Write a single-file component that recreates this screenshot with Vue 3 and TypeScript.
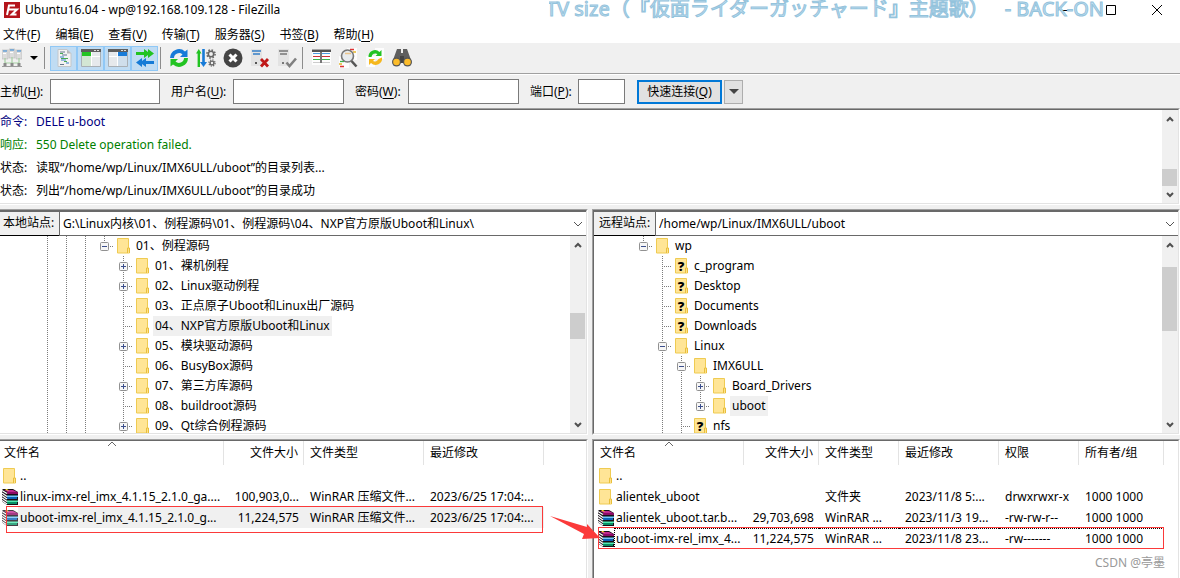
<script setup lang="ts">
import { ref } from 'vue'

interface Mnemonic { text: string; key: string }
interface TreeNode { guides: string; label: string; unknown?: boolean; selected?: boolean }
interface FileRow { icon: string; cells: string[]; selected?: boolean; focused?: boolean }
interface Column { title: string; width: number; right?: boolean }

const menus: Mnemonic[] = [
  { text: '文件', key: 'F' },
  { text: '编辑', key: 'E' },
  { text: '查看', key: 'V' },
  { text: '传输', key: 'T' },
  { text: '服务器', key: 'S' },
  { text: '书签', key: 'B' },
  { text: '帮助', key: 'H' },
]

const toggles = [
  { id: 'messages', label: '消息日志' },
  { id: 'local', label: '本地目录树' },
  { id: 'remote', label: '远程目录树' },
  { id: 'queue', label: '传输队列' },
]
const actions = [
  { id: 'refresh', label: '刷新' },
  { id: 'process', label: '处理队列' },
  { id: 'cancel', label: '取消' },
  { id: 'disconnect', label: '断开连接' },
  { id: 'reconnect', label: '重新连接' },
]
const tools = [
  { id: 'filter', label: '过滤器' },
  { id: 'compare', label: '目录比较' },
  { id: 'sync', label: '同步浏览' },
  { id: 'find', label: '搜索' },
]

const fields = [
  { id: 'host', text: '主机', key: 'H' },
  { id: 'user', text: '用户名', key: 'U' },
  { id: 'pass', text: '密码', key: 'W' },
  { id: 'port', text: '端口', key: 'P' },
]
const login = ref<Record<string, string>>({ host: '', user: '', pass: '', port: '' })

const log = [
  { kind: 'command', name: '命令:', text: 'DELE u-boot' },
  { kind: 'reply', name: '响应:', text: '550 Delete operation failed.' },
  { kind: 'status', name: '状态:', text: '读取“/home/wp/Linux/IMX6ULL/uboot”的目录列表...' },
  { kind: 'status', name: '状态:', text: '列出“/home/wp/Linux/IMX6ULL/uboot”的目录成功' },
]

/* Guide letters: . blank, | line, t branch, p/P closed node, m/M open node (capital = last child) */
const sites: {
  id: string; label: string; path: string; nodes: TreeNode[]; thumb: number[]
  columns: Column[]; rows: FileRow[]
}[] = [
  {
    id: 'local-side',
    label: '本地站点:',
    path: 'G:\\Linux内核\\01、例程源码\\01、例程源码\\04、NXP官方原版Uboot和Linux\\',
    thumb: [60, 26, 77],
    nodes: [
      { guides: '|||M', label: '01、例程源码' },
      { guides: '|||.p', label: '01、裸机例程' },
      { guides: '|||.p', label: '02、Linux驱动例程' },
      { guides: '|||.t', label: '03、正点原子Uboot和Linux出厂源码' },
      { guides: '|||.t', label: '04、NXP官方原版Uboot和Linux', selected: true },
      { guides: '|||.p', label: '05、模块驱动源码' },
      { guides: '|||.t', label: '06、BusyBox源码' },
      { guides: '|||.p', label: '07、第三方库源码' },
      { guides: '|||.t', label: '08、buildroot源码' },
      { guides: '|||.p', label: '09、Qt综合例程源码' },
    ],
    columns: [
      { title: '文件名', width: 224 },
      { title: '文件大小', width: 80, right: true },
      { title: '文件类型', width: 120 },
      { title: '最近修改', width: 120 },
    ],
    rows: [
      { icon: 'folder', cells: ['..', '', '', ''] },
      { icon: 'rar', cells: ['linux-imx-rel_imx_4.1.15_2.1.0_ga....', '100,903,0...', 'WinRAR 压缩文件...', '2023/6/25 17:04:...'] },
      { icon: 'rar', cells: ['uboot-imx-rel_imx_4.1.15_2.1.0_g...', '11,224,575', 'WinRAR 压缩文件...', '2023/6/25 17:04:...'], selected: true },
    ],
  },
  {
    id: 'remote-side',
    label: '远程站点:',
    path: '/home/wp/Linux/IMX6ULL/uboot',
    thumb: [14, 64, 85],
    nodes: [
      { guides: 'M', label: 'wp' },
      { guides: '.t', label: 'c_program', unknown: true },
      { guides: '.t', label: 'Desktop', unknown: true },
      { guides: '.t', label: 'Documents', unknown: true },
      { guides: '.t', label: 'Downloads', unknown: true },
      { guides: '.m', label: 'Linux' },
      { guides: '.|m', label: 'IMX6ULL' },
      { guides: '.||p', label: 'Board_Drivers' },
      { guides: '.||P', label: 'uboot', selected: true },
      { guides: '.|t', label: 'nfs', unknown: true },
    ],
    columns: [
      { title: '文件名', width: 150 },
      { title: '文件大小', width: 75, right: true },
      { title: '文件类型', width: 80 },
      { title: '最近修改', width: 100 },
      { title: '权限', width: 80 },
      { title: '所有者/组', width: 85 },
    ],
    rows: [
      { icon: 'folder', cells: ['..', '', '', '', '', ''] },
      { icon: 'folder', cells: ['alientek_uboot', '', '文件夹', '2023/11/8 5:...', 'drwxrwxr-x', '1000 1000'] },
      { icon: 'rar', cells: ['alientek_uboot.tar.b...', '29,703,698', 'WinRAR ...', '2023/11/3 19...', '-rw-rw-r--', '1000 1000'] },
      { icon: 'rar', cells: ['uboot-imx-rel_imx_4...', '11,224,575', 'WinRAR ...', '2023/11/8 23...', '-rw-------', '1000 1000'], focused: true },
    ],
  },
]

const isBox = (g: string) => 'pPmM'.includes(g)
const grow = (n: number) => ({ flexGrow: n })
</script>

<template>
  <div class="app">
    <svg class="sprite" aria-hidden="true">
      <symbol id="folder" viewBox="0 0 16 16">
        <path d="M1.500 .5h11v10l1 .5v4h-12z" fill="#ffe596" stroke="#efcb52" />
        <path d="M11.500 15v-5h2v5" fill="#ffe08a" stroke="#e8bf3c" />
      </symbol>
      <symbol id="rar" viewBox="0 0 16 16">
        <path d="M1 0h10l5 3v13H5L0 12.500V1z" fill="#181018" />
        <path d="M2 1h9l4 2H6z" fill="#c02890" />
        <path d="M5 3h11v2H5z" fill="#8c0c66" />
        <path d="M5 6.500h11V8H5z" fill="#70c8f8" /><path d="M5 8h10v2H5z" fill="#0c62b8" />
        <path d="M5 11.500h11V13H5z" fill="#50e8b0" /><path d="M5 13h10v2H5z" fill="#089064" />
        <path d="M3 0h2l2 1.500H5z" fill="#ffe020" />
        <path d="M0 1.500l5 3M0 4l5 3.500M0 6.500l5 3.500M0 9l5 3.500M0 11.500L5 15" fill="none" stroke="#fff" stroke-width="1.300" />
      </symbol>
      <symbol id="sitemanager" viewBox="0 0 20 20">
        <g fill="#dcdcdc" stroke="#b8b8b8" stroke-width=".6">
          <path d="M0 2h6v9H0zM7 1h6v9H7zM14 2h6v9h-6z" />
        </g>
        <path d="M1 3h4M8 2h4M15 3h4" stroke="#2f86d6" stroke-width="1.200" />
        <path d="M1 5.500h3M8 4.500h3M15 5.500h3" stroke="#fff" />
        <path d="M3 10v5h14v-5M10 9v6" fill="none" stroke="#a5cfa2" stroke-width="1.200" />
        <path d="M0 18.500h20M3 15v3M10 15v3M17 15v3" stroke="#9a9a9a" stroke-width="1.200" />
        <path d="M1.500 15h3v3h-3zM8.500 15h3v3h-3zM15.500 15h3v3h-3z" fill="#8a8a8a" />
      </symbol>
      <symbol id="messages" viewBox="0 0 20 20">
        <path d="M4 1.500h9l4 4v13H4z" fill="#f2f2f2" stroke="#c2c6ca" />
        <path d="M13 1.500v4h4z" fill="#b8b8b8" />
        <path d="M6 4h5M8 7h5M6 16.500h4" stroke="#66788c" />
        <path d="M6 5.500h3M7 10.500h7M10 13.500h3" stroke="#46a952" />
        <path d="M6 9h4M7 12h5M12 15h3" stroke="#3a7ecb" />
      </symbol>
      <symbol id="local" viewBox="0 0 20 20">
        <path d="M.5 1.500h19v17H.5z" fill="#e6e9ec" stroke="#a9b0b6" />
        <path d="M0 1h20v3H0z" fill="#5e5e5e" /><path d="M13 2h2v1h-2zM16 2h2v1h-2z" fill="#ddd" />
        <path d="M1 4h9v4H1z" fill="#24c424" /><path d="M1 8h9v10H1z" fill="#d3e6d4" />
        <path d="M10.500 4v14" stroke="#fff" /><path d="M11 8.500h8" stroke="#fff" />
      </symbol>
      <symbol id="remote" viewBox="0 0 20 20">
        <path d="M.5 1.500h19v17H.5z" fill="#e6e9ec" stroke="#a9b0b6" />
        <path d="M0 1h20v3H0z" fill="#5e5e5e" /><path d="M13 2h2v1h-2zM16 2h2v1h-2z" fill="#ddd" />
        <path d="M10 4h9v4h-9z" fill="#177bd8" /><path d="M10 8h9v10h-9z" fill="#cfdeeb" />
        <path d="M9.500 4v14" stroke="#fff" /><path d="M1 8.500h8" stroke="#fff" />
      </symbol>
      <symbol id="queue" viewBox="0 0 20 20">
        <path d="M1 4h8V1l4 3V1l6 4.500L13 10V7l-4 3V7H1z" fill="#22c322" />
        <path d="M19 13h-8v-3l-4 3v-3L1 14.500 7 19v-3l4 3v-3h8z" fill="#157bd6" />
      </symbol>
      <symbol id="refresh" viewBox="0 0 20 20">
        <path d="M1 10a9 9 0 0 1 15-6.500l2.500-2v7.500h-7.500l2.500-2.500A5 5 0 0 0 5 10z" fill="#177bd8" />
        <path d="M19 10a9 9 0 0 1-15 6.500l-2.500 2v-7.500h7.500l-2.500 2.500A5 5 0 0 0 15 10z" fill="#22c322" />
      </symbol>
      <symbol id="process" viewBox="0 0 20 20">
        <path d="M2.800 4v15" stroke="#22c322" stroke-width="2.400" /><path d="M0 5.500h5.500L2.800 1z" fill="#22c322" />
        <path d="M7.500 1v14" stroke="#177bd8" stroke-width="2.600" /><path d="M4 14h7l-3.500 5z" fill="#177bd8" />
        <circle cx="15" cy="6" r="2.700" fill="none" stroke="#666" stroke-width="1.600" />
        <circle cx="15" cy="6" r="4.100" fill="none" stroke="#666" stroke-width="1.500" stroke-dasharray="1.600 1.620" />
        <circle cx="16" cy="15" r="1.900" fill="none" stroke="#666" stroke-width="1.400" />
        <circle cx="16" cy="15" r="3.100" fill="none" stroke="#666" stroke-width="1.200" stroke-dasharray="1.200 1.235" />
      </symbol>
      <symbol id="cancel" viewBox="0 0 20 20">
        <circle cx="10" cy="10" r="9.500" fill="#444" />
        <path d="M6.500 6.500l7 7M13.500 6.500l-7 7" stroke="#fff" stroke-width="3" />
      </symbol>
      <symbol id="disconnect" viewBox="0 0 20 20">
        <path d="M1 1h11v17H1z" fill="#e3e3e3" /><path d="M2 3h9M3 6h7" stroke="#347fc7" stroke-width="1.500" />
        <path d="M5 14h2v2H5z" fill="#555" />
        <path d="M11 11l7 7.500M18 11l-7 7.500" stroke="#c01818" stroke-width="2.800" />
      </symbol>
      <symbol id="reconnect" viewBox="0 0 20 20">
        <path d="M1 1h11v17H1z" fill="#e3e3e3" /><path d="M2 3h9M3 6h7" stroke="#777" stroke-width="1.500" />
        <path d="M5 14h2v2H5z" fill="#777" />
        <path d="M9.500 14.500l3 3.500 6.500-7.500" fill="none" stroke="#808080" stroke-width="2.600" />
      </symbol>
      <symbol id="filter" viewBox="0 0 20 20">
        <path d="M1 1h19v16H1z" fill="#fdfdfd" /><path d="M1 1.500h19v2.500H1z" fill="#555" />
        <path d="M2 5.500h7M11 5.500h8" stroke="#4d9be0" />
        <path d="M2 8.500h7M11 8.500h8" stroke="#c33" /><path d="M2 11.500h7M11 11.500h8" stroke="#39b54a" />
        <path d="M2 14.500h7M11 14.500h8" stroke="#ccc" /><path d="M10 2v13" stroke="#555" stroke-width="1.600" />
      </symbol>
      <symbol id="compare" viewBox="0 0 20 20">
        <path d="M9 0h10v12H9zM1 8h10v12H1z" fill="#fdfdfd" />
        <path d="M12 1.500h4M2 18.500h4" stroke="#d33" stroke-width="1.300" /><path d="M15 4h3M1 16h3" stroke="#e4b62c" stroke-width="1.300" />
        <path d="M2 13.500h4" stroke="#39b54a" stroke-width="1.300" />
        <circle cx="9.500" cy="8" r="6" fill="#e7ebee" stroke="#777" stroke-width="1.600" />
        <path d="M7 5.500h6" stroke="#eac48d" stroke-width="1.500" /><path d="M13.500 13l5 5.500" stroke="#555" stroke-width="2.600" />
      </symbol>
      <symbol id="sync" viewBox="0 0 20 20">
        <path d="M10 0h9v11h-9zM1 8h9v11H1z" fill="#fdfdfd" />
        <path d="M3.500 9a6.500 6.500 0 0 1 11-5l2-2v6h-6l2-2a4 4 0 0 0-6 3z" fill="#22c322" />
        <path d="M17 9.500a6.500 6.500 0 0 1-11 5.500l-2 2v-6h6l-2 2a4 4 0 0 0 5.500-2z" fill="#f5b71c" />
      </symbol>
      <symbol id="find" viewBox="0 0 20 20">
        <path d="M5 1h4v4h2V1h4l4 11H1z" fill="#5f5f5f" /><path d="M8 8h4v7H8z" fill="#444" />
        <circle cx="4.500" cy="14" r="4.500" fill="#555" /><circle cx="15.500" cy="14" r="4.500" fill="#555" />
        <circle cx="4.500" cy="14" r="3.300" fill="#fcbc2a" /><circle cx="15.500" cy="14" r="3.300" fill="#fcbc2a" />
      </symbol>
    </svg>

    <header class="titlebar">
      <svg class="logo" viewBox="0 0 16 16" aria-hidden="true">
        <path d="M0 0h16v16H0z" fill="#b4141b" />
        <path d="M3 13L5 3.500h6M4.200 7.500h4M8 7.500h5L7.800 12.500H12.500" fill="none" stroke="#fff" stroke-width="2" />
      </svg>
      <h1>Ubuntu16.04 - wp@192.168.109.128 - FileZilla</h1>
      <div class="window-buttons">
        <button aria-label="最小化"><svg viewBox="0 0 12 12"><path d="M1 6.500h10" /></svg></button>
        <button aria-label="最大化"><svg viewBox="0 0 12 12"><path d="M1.500 1.500h9v9h-9z" /></svg></button>
        <button aria-label="关闭"><svg viewBox="0 0 12 12"><path d="M1 1l10 10M11 1L1 11" /></svg></button>
      </div>
      <p class="lyrics"><span>TV size（『仮面ライダーガッチャード』主題歌）</span><span>- BACK-ON</span></p>
    </header>

    <nav class="menubar">
      <button v-for="m in menus" :key="m.key">{{ m.text }}(<u>{{ m.key }}</u>)</button>
    </nav>

    <div class="toolbar" role="toolbar">
      <button class="tool" aria-label="站点管理器"><svg class="icon"><use href="#sitemanager" /></svg></button>
      <button class="drop" aria-label="站点列表"><svg viewBox="0 0 8 4"><path d="M0 0h8L4 4z" /></svg></button>
      <i class="sep"></i>
      <button v-for="t in toggles" :key="t.id" class="tool on" aria-pressed="true" :aria-label="t.label">
        <svg class="icon"><use :href="'#' + t.id" /></svg>
      </button>
      <i class="sep"></i>
      <button v-for="t in actions" :key="t.id" class="tool" :aria-label="t.label">
        <svg class="icon"><use :href="'#' + t.id" /></svg>
      </button>
      <i class="sep"></i>
      <button v-for="t in tools" :key="t.id" class="tool" :aria-label="t.label">
        <svg class="icon"><use :href="'#' + t.id" /></svg>
      </button>
    </div>

    <form class="quick" @submit.prevent>
      <template v-for="f in fields" :key="f.id">
        <label :for="f.id" :class="'label-' + f.id">{{ f.text }}(<u>{{ f.key }}</u>):</label>
        <input :id="f.id" v-model="login[f.id]" :class="{ short: f.id === 'port' }" :type="f.id === 'pass' ? 'password' : 'text'" />
      </template>
      <button class="connect">快速连接(<u>Q</u>)</button>
      <button class="history" type="button" aria-label="历史记录"><svg viewBox="0 0 10 5"><path d="M0 0h10L5 5z" /></svg></button>
    </form>

    <section class="pane log-pane">
      <div class="inner scroller">
        <ul class="log">
          <li v-for="(l, i) in log" :key="i" :class="l.kind"><b>{{ l.name }}</b><span>{{ l.text }}</span></li>
        </ul>
        <div class="scrollbar">
          <button aria-label="向上滚动"><svg viewBox="0 0 8 6"><path d="M1 5l3-3 3 3" /></svg></button>
          <i :style="grow(42)"></i><i class="thumb" :style="grow(17)"></i>
          <button aria-label="向下滚动"><svg viewBox="0 0 8 6"><path d="M1 1l3 3 3-3" /></svg></button>
        </div>
      </div>
    </section>

    <main class="sites">
      <div v-for="s in sites" :key="s.id" class="side" :class="s.id">
        <section class="pane">
          <div class="inner">
            <div class="path">
              <label :for="s.id + '-path'">{{ s.label }}</label>
              <div class="combo">
                <select :id="s.id + '-path'"><option>{{ s.path }}</option></select>
                <svg viewBox="0 0 10 6" aria-hidden="true"><path d="M1 1l4 4 4-4" /></svg>
              </div>
            </div>
            <div class="scroller tree-area">
              <ul class="tree">
                <li v-for="(n, i) in s.nodes" :key="i">
                  <svg v-for="(g, k) in n.guides" :key="k" class="guide" viewBox="0 0 19 20" aria-hidden="true">
                    <path v-if="'|tpm'.includes(g)" class="dots" d="M9.500 0v20" />
                    <path v-if="'PM'.includes(g)" class="dots" d="M9.500 0v10" />
                    <path v-if="g !== '|' && g !== '.'" class="dots" d="M9 10.500h10" />
                    <template v-if="isBox(g)">
                      <rect x="5.500" y="6.500" width="8" height="8" rx="1" fill="#f6f6f6" stroke="#919191" />
                      <path d="M7 10.500h5" stroke="#3c4f8c" />
                      <path v-if="g === 'p' || g === 'P'" d="M9.500 8v5" stroke="#3c4f8c" />
                    </template>
                  </svg>
                  <i class="node-icon">
                    <svg><use href="#folder" /></svg>
                    <b v-if="n.unknown">?</b>
                  </i>
                  <span :class="{ selected: n.selected }">{{ n.label }}</span>
                </li>
              </ul>
              <div class="scrollbar">
                <button aria-label="向上滚动"><svg viewBox="0 0 8 6"><path d="M1 5l3-3 3 3" /></svg></button>
                <i :style="grow(s.thumb[0])"></i><i class="thumb" :style="grow(s.thumb[1])"></i><i :style="grow(s.thumb[2])"></i>
                <button aria-label="向下滚动"><svg viewBox="0 0 8 6"><path d="M1 1l3 3 3-3" /></svg></button>
              </div>
            </div>
          </div>
        </section>

        <section class="pane list-pane">
          <div class="inner">
            <table>
              <colgroup><col v-for="c in s.columns" :key="c.title" :style="{ width: c.width + 'px' }" /></colgroup>
              <thead>
                <tr>
                  <th v-for="(c, i) in s.columns" :key="c.title" scope="col" :class="{ right: c.right }">
                    {{ c.title }}
                    <svg v-if="i === 0" class="sort" viewBox="0 0 10 6" aria-hidden="true"><path d="M1 5l4-4 4 4" /></svg>
                  </th>
                </tr>
              </thead>
              <tbody>
                <tr v-for="(r, i) in s.rows" :key="i" :class="{ selected: r.selected, focused: r.focused }">
                  <td v-for="(c, k) in r.cells" :key="k" :class="{ right: s.columns[k].right }">
                    <div v-if="k === 0" class="name">
                      <svg class="file-icon"><use :href="'#' + r.icon" /></svg><span>{{ c }}</span>
                    </div>
                    <template v-else>{{ c }}</template>
                  </td>
                </tr>
              </tbody>
            </table>
            <i class="mark"></i>
          </div>
        </section>
      </div>
      <svg class="arrow" viewBox="0 0 50 24" aria-hidden="true">
        <path d="M0 0l37 11 0-3 13 14-18 1 2-5z" fill="#fb3a3a" />
      </svg>
      <span class="watermark">CSDN @亭墨</span>
    </main>
  </div>
</template>

<style>
html, body { margin: 0; background: #fff; }
</style>

<style scoped>
.app {
  display: flex;
  flex-direction: column;
  height: 100vh;
  overflow: hidden;
  background: #f0f0f0;
  color: #000;
  font: 12px/20px "Noto Sans", "Noto Sans CJK SC", sans-serif;
}
.app * { box-sizing: border-box; }
.sprite { position: absolute; width: 0; height: 0; }
button, input, select { font: inherit; color: inherit; margin: 0; padding: 0; border: 0; background: none; border-radius: 0; }
h1, p, ul { margin: 0; padding: 0; list-style: none; font-size: inherit; font-weight: 400; }
svg { display: block; flex: none; }
u { text-underline-offset: 2px; }

.titlebar { position: relative; display: flex; align-items: center; height: 26px; padding: 0 0 7px 4px; background: #fff; flex: none; }
.logo { width: 16px; height: 16px; margin-right: 5px; }
h1 { flex: 1; white-space: nowrap; font-size: 12px; }
.window-buttons { display: flex; }
.window-buttons button { width: 46px; height: 18px; display: flex; justify-content: center; align-items: center; }
.window-buttons svg { width: 12px; height: 12px; fill: none; stroke: #000; }
.lyrics {
  position: absolute; right: 76px; top: 0; width: 555px; height: 25px;
  display: flex; justify-content: flex-end; gap: 16px; overflow: hidden;
  white-space: nowrap; font: 20px/18px "Noto Sans", "Noto Sans CJK JP", sans-serif;
  text-spacing-trim: space-all;
  color: #c3e0f2; -webkit-text-stroke: 1px #94c3dc;
}

.menubar { display: flex; gap: 15px; height: 17px; padding-left: 3px; background: #fff; flex: none; }
.menubar button { line-height: 17px; white-space: nowrap; }

.toolbar { display: flex; align-items: center; height: 31px; border-bottom: 1px solid #a0a0a0; flex: none; }
.tool { width: 27px; height: 25px; display: flex; align-items: center; justify-content: center; flex: none; }
.tool:first-child { width: 24px; }
.tool.on { background: #c0dcf3; border: 1px solid #90c8f6; }
.icon { width: 20px; height: 20px; }
.drop { width: 19px; display: flex; justify-content: center; }
.drop svg { width: 8px; height: 4px; }
.sep { width: 1px; height: 22px; margin: 0 5px 0 1px; background: #8c8c8c; flex: none; }
.tool + .sep { margin: 0 4px 0 2px; }

.quick { display: flex; align-items: center; height: 34px; border-top: 1px solid #fff; flex: none; }
.quick label { white-space: nowrap; flex: none; }
.label-host { width: 50px; }
.label-user { width: 62px; }
.label-pass { width: 53px; }
.label-port { width: 48px; }
.quick input { width: 111px; height: 25px; margin-right: 11px; padding: 0 4px; border: 1px solid #7a7a7a; background: #fff; outline: 0; }
.quick #host { width: 110px; }
.quick input.short { width: 47px; margin-right: 12px; }
.connect { width: 85px; height: 24px; border: 2px solid #0078d7; background: #e1e1e1; line-height: 20px; white-space: nowrap; }
.history { width: 19px; height: 24px; margin-left: 2px; border: 1px solid #adadad; background: #e1e1e1; display: flex; align-items: center; justify-content: center; }
.history svg { width: 10px; height: 5px; fill: #444; }

.pane { border: 1px solid; border-color: #a0a0a0 #fff #fff #a0a0a0; flex: none; }
.inner { border: 1px solid; border-color: #696969 #e3e3e3 #e3e3e3 #696969; background: #fff; }
.log-pane, .log-pane .inner, .local-side .pane, .local-side .inner { border-left: 0; }

.scroller { display: flex; overflow: hidden; }
.scrollbar { display: flex; flex-direction: column; width: 16px; flex: none; background: #f0f0f0; }
.scrollbar button { height: 17px; width: 15px; display: flex; align-items: center; justify-content: center; flex: none; }
.scrollbar svg { width: 8px; height: 6px; fill: none; stroke: #505050; stroke-width: 2; }
.scrollbar i { flex-basis: 0; width: 15px; }
.thumb { background: #cdcdcd; }

.log { flex: 1; min-width: 0; padding-bottom: 1px; }
.log li { display: flex; height: 23px; line-height: 23px; white-space: nowrap; }
.log b { width: 36px; font-weight: 400; flex: none; }
.command { color: #000080; }
.reply { color: #008000; }

.sites { position: relative; flex: 1; min-height: 0; display: grid; grid-template-columns: 1fr 1fr; column-gap: 4px; padding-top: 4px; }
.side { display: flex; flex-direction: column; gap: 4px; min-width: 0; }
.path { display: flex; height: 25px; border-top: 1px solid #696969; }
.path label { flex: none; padding: 0 4px 0 3px; line-height: 22px; background: #f0f0f0; border-bottom: 1px solid #000; white-space: nowrap; width: 59px; }
.remote-side .path label { width: 61px; padding-left: 5px; }
.combo { flex: 1; min-width: 0; display: flex; align-items: center; border-left: 1px solid #696969; border-bottom: 1px solid #696969; padding-right: 3px; }
.combo select { flex: 1; min-width: 0; height: 23px; padding-left: 3px; appearance: none; outline: 0; line-height: 22px; }
.combo svg { width: 10px; height: 6px; fill: none; stroke: #555; }

.tree-area { height: 197px; }
.tree { flex: 1; min-width: 0; padding-left: 38px; overflow: hidden; }
.remote-side .tree { padding-left: 40px; }
.tree li { display: flex; align-items: center; height: 20px; white-space: nowrap; }
.guide { width: 19px; height: 20px; }
.dots { fill: none; stroke: #7c7c7c; stroke-dasharray: 1 1; }
.node-icon { position: relative; width: 16px; height: 16px; margin: 0 2px; font-style: normal; }
.node-icon svg { width: 16px; height: 16px; }
.node-icon b { position: absolute; left: 0; top: 0; width: 14px; text-align: center; font: 800 13px/16px "Open Sans", sans-serif; }
.tree span { padding: 0 2px; }
.tree .selected { background: #f0f0f0; }

.list-pane { flex: 1; display: flex; min-height: 0; border-bottom: 0; }
.list-pane .inner { flex: 1; min-width: 0; position: relative; border-bottom: 0; }
table { table-layout: fixed; border-collapse: separate; border-spacing: 0; width: 0; }
th { position: relative; height: 24px; padding: 0 0 0 6px; text-align: left; font-weight: 400; line-height: 24px; border-right: 1px solid #e3e3e3; white-space: nowrap; }
th:first-child { padding-left: 4px; }
.remote-side th:first-child { padding-left: 6px; }
td { height: 21px; padding: 0 0 0 6px; line-height: 21px; white-space: nowrap; }
th.right, td.right { text-align: right; padding: 0 5px 0 0; }
td:first-child { padding-left: 2px; }
.remote-side td:first-child { padding-left: 4px; }
.sort { position: absolute; left: 50%; top: 0; width: 10px; height: 6px; margin-left: -5px; fill: none; stroke: #666; }
.name { display: flex; align-items: center; height: 21px; }
.name span { flex: 1; padding-left: 2px; height: 21px; }
.file-icon { width: 16px; height: 16px; }
.selected td { background: #f0f0f0; }
.selected td:first-child { background: linear-gradient(to right, #fff 18px, #f0f0f0 18px); }
.selected .file-icon { opacity: .8; }
.focused td { border-top: 1px dotted #000; line-height: 20px; }
.focused td:first-child { border-top: 0; }
.focused td:first-child span { border-top: 1px dotted #000; border-left: 1px dotted #000; padding-left: 1px; }
.focused td:last-child { border-right: 1px dotted #000; }
.mark { position: absolute; border: 1px solid #fb3a3a; left: 6px; width: 537px; top: 65px; height: 27px; }
.remote-side .mark { left: 4px; width: 566px; top: 86px; height: 22px; }
.arrow { position: absolute; left: 50%; top: 311px; width: 50px; height: 24px; margin-left: -40px; }
.watermark { position: absolute; right: 15px; bottom: 5px; color: #999; }
</style>
